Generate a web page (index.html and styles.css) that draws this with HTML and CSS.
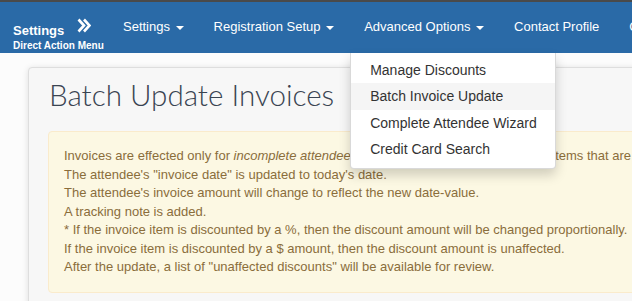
FILE: index.html
```html
<!DOCTYPE html>
<html>
<head>
<meta charset="utf-8">
<title>Batch Update Invoices</title>
<link rel="stylesheet" href="styles.css">
</head>
<body>
<nav class="navbar">
  <div class="brand">
    <div class="brand-title">Settings
      <svg class="chev" width="14" height="15" viewBox="0 0 14 15"><path d="M1.5 1.5 L7 7.5 L1.5 13.5 M7 1.5 L12.5 7.5 L7 13.5" fill="none" stroke="#fff" stroke-width="2.6" stroke-linejoin="miter"/></svg>
    </div>
    <div class="brand-sub">Direct Action Menu</div>
  </div>
  <ul class="nav">
    <li class="nav-item">Settings <span class="caret"></span></li>
    <li class="nav-item">Registration Setup <span class="caret"></span></li>
    <li class="nav-item open">Advanced Options <span class="caret"></span>
      <ul class="dropdown">
        <li class="dd-item">Manage Discounts</li>
        <li class="dd-item active">Batch Invoice Update</li>
        <li class="dd-item">Complete Attendee Wizard</li>
        <li class="dd-item">Credit Card Search</li>
      </ul>
    </li>
    <li class="nav-item">Contact Profile</li>
    <li class="nav-item">Communications</li>
  </ul>
</nav>
<main class="panel">
  <h1 class="title">Batch Update Invoices</h1>
  <div class="alert">
    <p class="line">Invoices are effected only for <i>incomplete attendees</i> and only those with open invoice items that are not yet finalized.</p>
    <p class="line">The attendee's "invoice date" is updated to today's date.</p>
    <p class="line">The attendee's invoice amount will change to reflect the new date-value.</p>
    <p class="line">A tracking note is added.</p>
    <p class="line">* If the invoice item is discounted by a %, then the discount amount will be changed proportionally.</p>
    <p class="line">If the invoice item is discounted by a $ amount, then the discount amount is unaffected.</p>
    <p class="line">After the update, a list of "unaffected discounts" will be available for review.</p>
  </div>
</main>
</body>
</html>
```
FILE: styles.css
```css
html, body {
  margin: 0;
  padding: 0;
}
body {
  background: #fcfcfc;
  font-family: "Liberation Sans", Arial, sans-serif;
  width: 632px;
  height: 301px;
  overflow: hidden;
}
.navbar {
  display: flex;
  align-items: flex-start;
  height: 51px;
  background: #2a6aa7;
  border-top: 2px solid #4a4a4a;
  color: #fff;
  white-space: nowrap;
  position: relative;
  z-index: 2;
}
.brand {
  width: 95px;
  padding-left: 13px;
  padding-top: 19px;
  flex: none;
}
.brand-title {
  font-weight: bold;
  font-size: 13px;
  line-height: 16px;
  height: 16px;
}
.chev {
  margin-left: 9px;
  vertical-align: -1px;
  position: relative;
  top: -3px;
}
.brand-sub {
  font-weight: bold;
  font-size: 10px;
  line-height: 12px;
  margin-top: 3px;
}
.nav {
  display: flex;
  margin: 0;
  padding: 0;
  list-style: none;
}
.nav-item {
  position: relative;
  font-size: 13px;
  line-height: 20px;
  padding: 15px 15px 16px;
}
.caret {
  display: inline-block;
  width: 0;
  height: 0;
  margin-left: 2px;
  vertical-align: middle;
  border-top: 4px solid #fff;
  border-left: 4px solid transparent;
  border-right: 4px solid transparent;
}
.dropdown {
  position: absolute;
  top: 51px;
  left: 1px;
  width: 206px;
  box-sizing: border-box;
  margin: 0;
  padding: 4px 0 5px;
  list-style: none;
  background: #fff;
  border: 1px solid rgba(0,0,0,.15);
  border-top: none;
  box-shadow: 0 6px 12px rgba(0,0,0,.175);
  border-radius: 0 0 4px 4px;
}
.dd-item {
  padding: 3px 19px;
  font-size: 14px;
  line-height: 20.4px;
  color: #333;
}
.dd-item.active {
  background: #f5f5f5;
}
.panel {
  display: block;
  margin: 14px 0 0 28px;
  width: 700px;
  height: 300px;
  background: #f7f7f7;
  border: 1px solid #dedede;
  border-radius: 4px;
  box-shadow: 0 1px 6px rgba(0,0,0,.12);
  padding: 10px 19px 0;
}
.title {
  margin: 0 0 20px 1px;
  font-family: Lato, "Open Sans", sans-serif;
  font-weight: 300;
  font-size: 29.6px;
  line-height: 33px;
  color: #3a4452;
}
.alert {
  background: #fcf8e3;
  border: 1px solid #faebcc;
  border-radius: 4px;
  padding: 15px;
  color: #8a6d3b;
  font-size: 13px;
  line-height: 18.57px;
  white-space: nowrap;
}
.line {
  margin: 0;
}
```
